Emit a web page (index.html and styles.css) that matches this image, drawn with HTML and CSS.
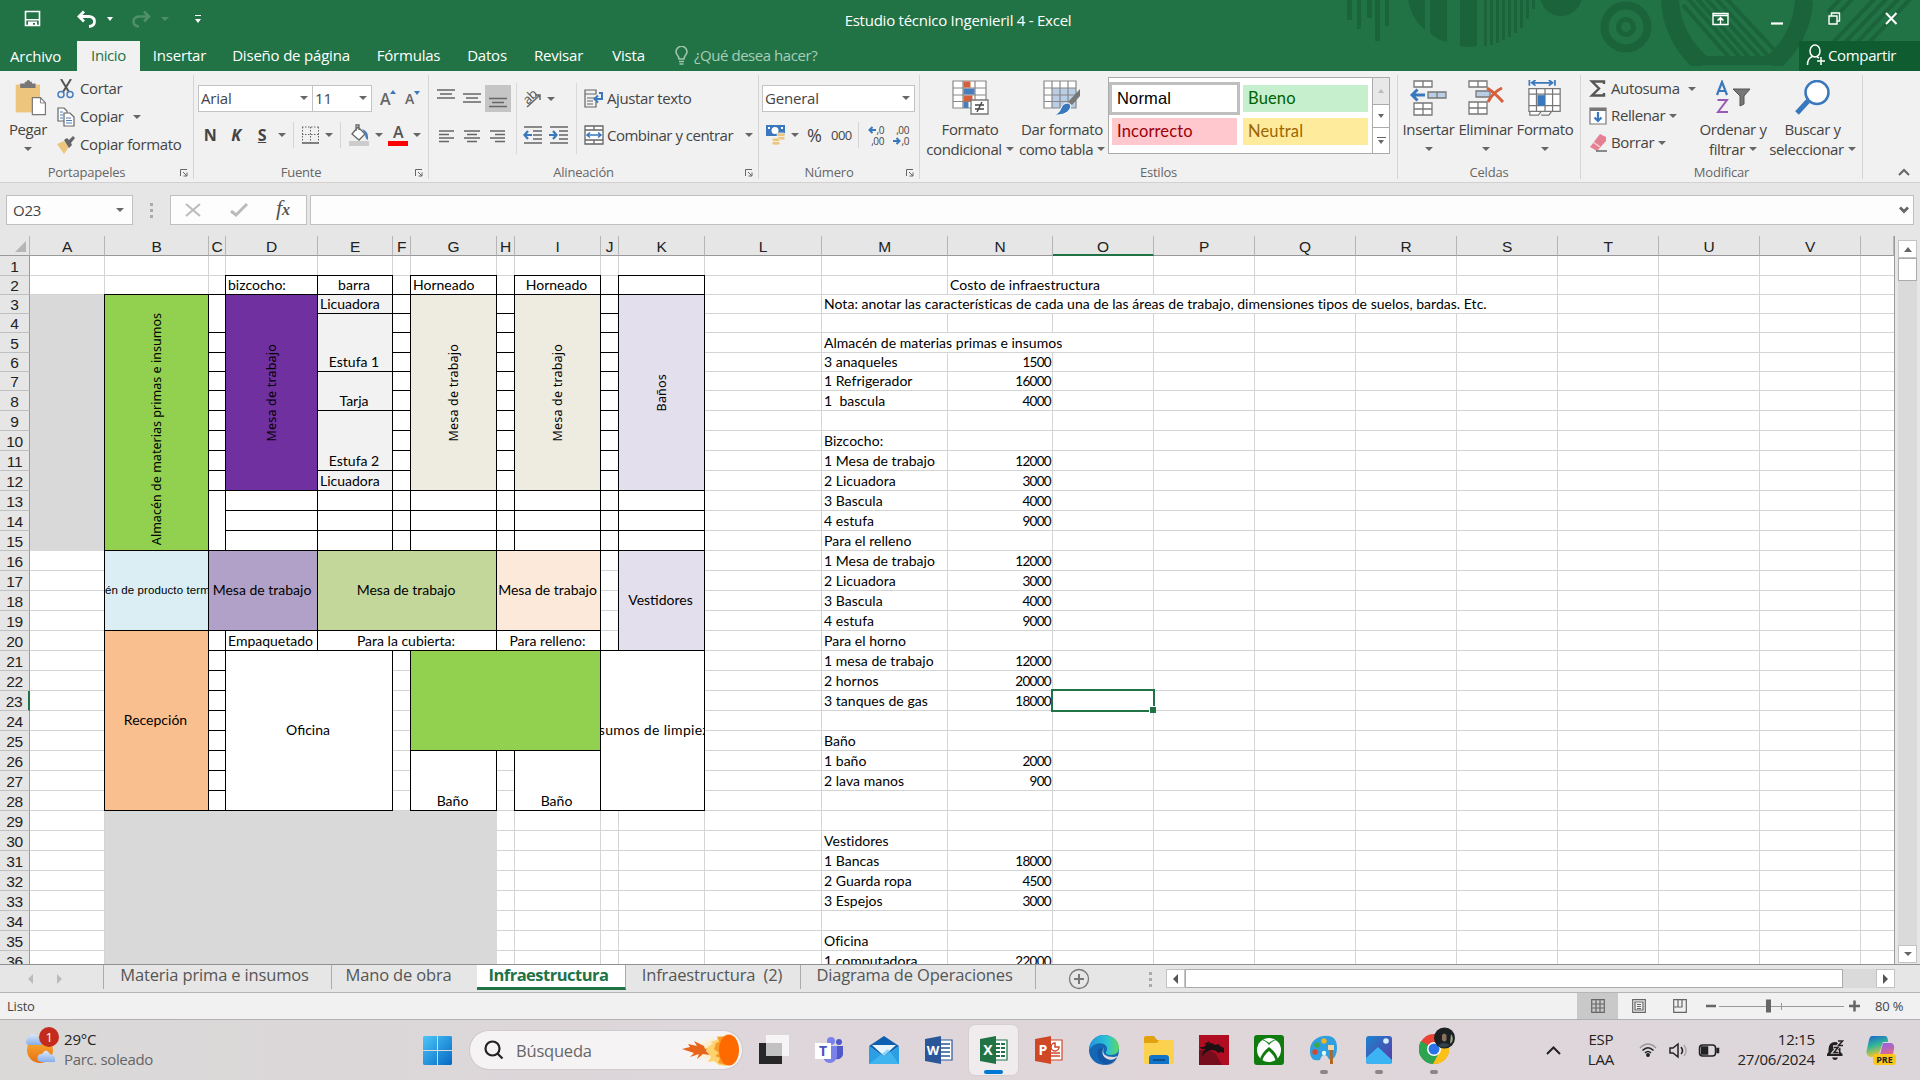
FILE: index.html
```html
<!DOCTYPE html>
<html lang="es">
<head>
<meta charset="utf-8">
<title>Estudio técnico Ingenieril 4 - Excel</title>
<link rel="stylesheet" href="styles.css">
</head>
<body>
<header class="top">
  <svg class="deco" width="580" height="66" viewBox="1340 0 580 66">
    <g fill="#1b633b">
      <path d="M1347 0h5v20h-5zM1357 0h4v29h-4zM1367 0h5v18h-5zM1375 0h5v41h-5zM1385 0h4v26h-4z"/>
      <path d="M1408 0h17v30q-14-12-17-30zM1430 0h17v42q-10-2-17-9zM1460 0h17v46q-9 2-17 0z"/>
      <path d="M1484 0h3v46h-3zM1490 0h3v45h-3zM1496 0h3v43h-3zM1502 0h3v40h-3zM1508 0h3v37h-3zM1514 0h3v33h-3zM1520 0h3v28h-3zM1526 0h3v19h-3zM1532 0h3v9h-3z"/>
      <circle cx="1561" cy="-5" r="21"/>
    </g>
    <g fill="none" stroke="#1b633b">
      <circle cx="1626" cy="27" r="21.500" stroke-width="8"/><circle cx="1626" cy="27" r="7.500" stroke-width="5"/>
      <path stroke-width="18" d="M1670 0q2 38 33 65M1804 0q-2 38-33 65"/>
      <path stroke-width="4" d="M1683 5l51 58M1684-6l60 68M1692-7l61 69M1700-8l62 68M1710-8l60 66M1720-8l60 64"/>
      <path stroke-width="4" d="M1878-5l-53 56M1890-5l-53 56M1902-5l-53 56M1914-5l-53 56M1856-5l-28 30M1844-5l-16 17"/>
    </g>
    <path fill="#1b633b" d="M1694 56h88v9h-88z"/>
  </svg>
  <div class="titlebar">
    <div class="qat">
      <svg width="18" height="18" viewBox="0 0 18 18"><path fill="none" stroke="#fff" stroke-width="1.600" d="M1.500 1.500h14v14h-14z"/><path fill="#fff" d="M2 9h13v1.500H2zM4 11.500h9V16h-2v-3H9v3H4z"/></svg>
      <svg class="undo" width="20" height="18" viewBox="0 0 20 18" fill="none" stroke="#fff" stroke-width="2.800"><path d="M7 1.500L2 6.500l5 5M3 6.500h9q5.500.5 5.500 5t-5.500 5"/></svg>
      <i class="dd w"></i>
      <svg class="redo" width="20" height="18" viewBox="0 0 20 18" fill="none" stroke="#4f8f6c" stroke-width="2.600"><path d="M13 1.500l5 5-5 5M17 6.500H8q-5.500.5-5.500 5t5.500 5"/></svg>
      <i class="dd dim"></i>
      <span class="custom"><i class="bar"></i><i class="dd w"></i></span>
    </div>
    <div class="doc-title">Estudio técnico Ingenieril 4 - Excel</div>
    <svg class="winctl" width="190" height="16" viewBox="0 0 190 16" fill="none" stroke="#fff" stroke-width="1.400"><path d="M1 2.500h15v11H1zM1 4.500h15M8.500 13V7M5.500 9.500l3-3 3 3"/><path stroke-width="2.200" d="M59 12.500h12"/><path d="M117 5h8v8h-8zM119.500 5V2h8v8H125"/><path stroke-width="2" d="M174 2l10.500 11M184.500 2L174 13"/></svg>
  </div>
  <nav class="tabs">
    <span class="tab file">Archivo</span><span class="tab active">Inicio</span><span class="tab ins">Insertar</span><span class="tab dis">Diseño de página</span><span class="tab form">Fórmulas</span><span class="tab dat">Datos</span><span class="tab rev">Revisar</span><span class="tab vis">Vista</span>
    <svg class="bulb" width="15" height="20" viewBox="0 0 15 20" fill="none" stroke="#9cc4ac" stroke-width="1.600"><path d="M5 13q0-2-2-4.500a5.300 5.300 0 1 1 9 0Q10 11 10 13zM5 15.500h5M5.500 18h4"/></svg>
    <span class="ask">¿Qué desea hacer?</span>
    <span class="share"><svg width="20" height="22" viewBox="0 0 20 22" fill="none" stroke="#fff" stroke-width="1.500"><ellipse cx="9" cy="7" rx="5" ry="6"/><path d="M1.500 21q0-7 5-8.500M11 13l2 1M15 13v8M11 17h8"/></svg>Compartir</span>
  </nav>
</header>

<section class="ribbon">
  <div class="group g1">
    <div class="tools row">
      <div class="big paste"><svg width="36" height="40" viewBox="0 0 36 40"><path fill="#edc57c" d="M1 5h27v31H1z"/><path fill="#777" d="M6 9V4h5V2h2q0-2 2-2t2 2h2v2h4v5z"/><path fill="#fff" stroke="#777" stroke-width="1.300" d="M19.500 19.500h9l5.500 6v13H19.500z"/><path fill="none" stroke="#777" d="M28.500 19.500v6H34"/></svg><span>Pegar</span><i class="dd low"></i></div>
      <div class="list">
        <div><svg width="18" height="20" viewBox="0 0 18 20" fill="none" stroke-width="2"><path stroke="#555" d="M4 0l8 13M14 0L6 13"/><circle cx="4" cy="15.500" r="3" stroke="#4a7ebb" stroke-width="1.500"/><circle cx="13" cy="15.500" r="3" stroke="#4a7ebb" stroke-width="1.500"/></svg><span>Cortar</span></div>
        <div><svg width="18" height="20" viewBox="0 0 18 20" fill="#fff" stroke="#666" stroke-width="1.200"><path d="M1 1h6l3 3v10H1z"/><path d="M7 6h6l4 4v9H7z"/><path stroke="#4a7ebb" d="M3 5h3M3 8h3M3 11h3M9 11h5M9 13.500h6M9 16h6"/></svg><span>Copiar</span><i class="dd g"></i></div>
        <div><svg width="18" height="18" viewBox="0 0 18 18"><path fill="#edc57c" d="M0 8l7-3 5 6-5 7z"/><path fill="#666" d="M7 4l3-2 2 2 4-4 2 2-4 5 1 2-3 3z"/></svg><span>Copiar formato</span></div>
      </div>
    </div>
    <div class="glabel">Portapapeles<svg class="launch" viewBox="0 0 8 8"><path d="M.5 7V.5H7M3 3l4 4M7 3.500V7H3.500"/></svg></div>
  </div>

  <div class="group g2">
    <div class="tools col">
      <div class="line a"><span class="combo fname">Arial<i class="dd g"></i></span><span class="combo fsize">11<i class="dd g"></i></span><b class="fa">A<svg width="6" height="4" viewBox="0 0 6 4"><path d="M0 4l3-4 3 4z"/></svg></b><b class="fa sm">A<svg width="6" height="4" viewBox="0 0 6 4"><path d="M0 0l3 4 3-4z"/></svg></b></div>
      <div class="line b"><b class="fmt">N</b><b class="fmt it">K</b><b class="fmt un">S</b><i class="dd g"></i><u class="vs"></u>
        <svg width="19" height="18" viewBox="0 0 19 18" stroke="#666" fill="none"><path stroke-dasharray="1.500 1.500" d="M1 1h17M1 8.500h17M1.500 1v16M9.500 1v16M17.500 1v16"/><path stroke-width="1.600" d="M1 17h17"/></svg><i class="dd g"></i><u class="vs"></u>
        <svg width="22" height="22" viewBox="0 0 22 22"><path fill="#ccc" d="M1 17h20v5H1z"/><path fill="#fff" stroke="#666" stroke-width="1.300" d="M10 3l7 7-6 6-7-6zM8 7V1h3v5"/><path fill="#4a7ebb" d="M14 5q7 2 6 11-3-1-3-6z"/></svg><i class="dd g"></i>
        <span class="fcolor">A</span><i class="dd g"></i></div>
    </div>
    <div class="glabel">Fuente<svg class="launch" viewBox="0 0 8 8"><path d="M.5 7V.5H7M3 3l4 4M7 3.500V7H3.500"/></svg></div>
  </div>

  <div class="group g3">
    <div class="tools row">
      <div class="align">
        <div class="line a"><svg class="ic" viewBox="0 0 26 27"><path d="M4 5h18M7 9h12M4 13h18"/></svg><svg class="ic" viewBox="0 0 26 27"><path d="M4 9h18M7 13h12M4 17h18"/></svg><svg class="ic sel" viewBox="0 0 26 27"><path d="M4 13.500h18M7 17.500h12M4 21.500h18"/></svg></div>
        <div class="line b"><svg class="ic" viewBox="0 0 26 27"><path d="M6 9h15M6 12.500h10M6 16h15M6 19.500h10"/></svg><svg class="ic" viewBox="0 0 26 27"><path d="M5 9h16M8 12.500h10M5 16h16M8 19.500h10"/></svg><svg class="ic" viewBox="0 0 26 27"><path d="M5 9h15M10 12.500h10M5 16h15M10 19.500h10"/></svg></div>
      </div>
      <div class="indent">
        <div class="line a"><svg width="20" height="20" viewBox="0 0 20 20" fill="none" stroke="#666" stroke-width="1.500"><text x="1" y="14" transform="rotate(-45 6 9)" class="ab">ab</text><path d="M5 18L18 6M18 11V6h-5"/></svg><i class="dd g"></i></div>
        <div class="line b"><svg width="19" height="18" viewBox="0 0 19 18" fill="none" stroke="#666" stroke-width="1.400"><path d="M1 1h18M10 5h9M10 9h9M10 13h9M1 17h18"/><path stroke="#3a78bd" stroke-width="2.200" d="M9 9H2M5 5L1.500 9 5 13"/></svg><svg width="19" height="18" viewBox="0 0 19 18" fill="none" stroke="#666" stroke-width="1.400"><path d="M1 1h18M10 5h9M10 9h9M10 13h9M1 17h18"/><path stroke="#3a78bd" stroke-width="2.200" d="M0 9h7M4 5l3.500 4L4 13"/></svg></div>
      </div>
      <div class="wrap">
        <div class="line a"><svg width="20" height="19" viewBox="0 0 20 19" fill="none" stroke="#666" stroke-width="1.200"><path d="M1 1h11v4H1zM1 5v13h11v-5M3 9h8M3 12h6M3 15h6"/><path stroke="#3a78bd" stroke-width="2" d="M15 4h3v6h-7M14 6.500L10.500 10l3.500 3.500"/></svg><span>Ajustar texto</span></div>
        <div class="line b"><svg width="20" height="20" viewBox="0 0 20 20" fill="#fff" stroke="#666" stroke-width="1.300"><path d="M1 1h18v18H1zM10 1v4M10 15v4M1 5h18M1 15h18"/><path stroke="#3a78bd" stroke-width="1.600" fill="none" d="M3 10h14M6 7.500L3 10l3 2.500M14 7.500l3 2.500-3 2.500"/></svg><span>Combinar y centrar</span><i class="dd g"></i></div>
      </div>
    </div>
    <div class="glabel">Alineación<svg class="launch" viewBox="0 0 8 8"><path d="M.5 7V.5H7M3 3l4 4M7 3.500V7H3.500"/></svg></div>
  </div>

  <div class="group g4">
    <div class="tools col">
      <div class="line a"><span class="combo num">General<i class="dd g"></i></span></div>
      <div class="line b"><svg width="20" height="20" viewBox="0 0 20 20"><path fill="#3a78bd" d="M0 0h19v11H0z"/><circle cx="9" cy="5.500" r="3.500" fill="#fff"/><path fill="#fff" d="M2 2h2v2H2zM15 2h2v2h-2z"/><g fill="#edc57c" stroke="#f1f1f1" stroke-width=".8"><rect x="11" y="8" width="8" height="3.500" rx="1.700"/><rect x="11" y="11.500" width="8" height="3.500" rx="1.700"/><rect x="6" y="13" width="8" height="3.500" rx="1.700"/><rect x="6" y="16.500" width="8" height="3.500" rx="1.700"/></g></svg><i class="dd g"></i><span class="pct">%</span><span class="mil">000</span><u class="vs"></u>
        <div class="dec"><p><svg width="8" height="8" viewBox="0 0 8 8"><path d="M8 4H1.500M4.500 1L1.500 4l3 3"/></svg>,0</p><p>,00</p></div>
        <div class="dec"><p>,00</p><p><svg width="8" height="8" viewBox="0 0 8 8"><path d="M0 4h6.500M3.500 1l3 3-3 3"/></svg>,0</p></div></div>
    </div>
    <div class="glabel">Número<svg class="launch" viewBox="0 0 8 8"><path d="M.5 7V.5H7M3 3l4 4M7 3.500V7H3.500"/></svg></div>
  </div>

  <div class="group g5">
    <div class="tools row">
      <div class="big cond"><svg width="37" height="36" viewBox="0 0 37 36"><path fill="#fff" stroke="#888" stroke-width="1.200" d="M1 1h33v27H1zM1 8h33M1 15h33M1 21.500h33M11 1v27M23 1v27"/><path fill="#d65f3c" d="M11.500 1.500h7v6h-7zM11.500 15.500h9v6h-9z"/><path fill="#4a7ebb" d="M11.500 8.500h11v6h-11zM11.500 22h5v6h-5z"/><path fill="#fff" stroke="#777" stroke-width="1.300" d="M19 20h17v14H19z"/><path fill="none" stroke="#444" stroke-width="1.400" d="M23 25h9M23 29h9M30 22l-5 10"/></svg><span>Formato</span><span>condicional<i class="dd g"></i></span></div>
      <div class="big tabl"><svg width="38" height="36" viewBox="0 0 38 36"><path fill="#fff" d="M1 1h32v27H1z"/><path fill="#b9cde4" d="M9 8h24v20H9z"/><path fill="none" stroke="#888" stroke-width="1.200" d="M1 1h32v27H1zM1 8h32M1 15h32M1 21.500h32M9 1v27M17 1v27M25 1v27"/><path fill="#777" d="M37 9v7l-8 9-4-3z"/><path fill="#3a78bd" stroke="#fff" d="M25 23q4 1 2 6-4 7-17 6 6-1 8-7 2-5 7-5z"/></svg><span>Dar formato</span><span>como tabla<i class="dd g"></i></span></div>
      <div class="gallery"><div class="styles"><span class="st normal">Normal</span><span class="st good">Bueno</span><span class="st bad">Incorrecto</span><span class="st neutral">Neutral</span></div>
        <div class="gscroll"><span class="off"><i class="up"></i></span><span><i class="dd g"></i></span><span><i class="bar d"></i><i class="dd g"></i></span></div></div>
    </div>
    <div class="glabel est">Estilos</div>
  </div>

  <div class="group g6">
    <div class="tools row">
      <div class="big ci"><svg width="38" height="36" viewBox="0 0 38 36" fill="#fff" stroke="#777" stroke-width="1.300"><path d="M4 1h18v6H4zM13 1v6M4 23h18v12H4zM4 29h18M13 23v12"/><path fill="#b9cde4" d="M18 12h18v6H18zM27 12v6"/><path fill="none" stroke="#3a78bd" stroke-width="3" d="M15 15H3M7.500 9.500L2 15l5.500 5.500"/></svg><span>Insertar</span><i class="dd low"></i></div>
      <div class="big ce"><svg width="38" height="36" viewBox="0 0 38 36" fill="#fff" stroke="#777" stroke-width="1.300"><path d="M2 1h18v6H2zM11 1v6M2 22h18v12H2zM2 28h18M11 22v12"/><path fill="#b9cde4" d="M9 11h14v6H9z"/><path fill="none" stroke="#d65f3c" stroke-width="3" d="M20 8q7 4 16 14M35 8q-9 4-14 14"/></svg><span>Eliminar</span><i class="dd low"></i></div>
      <div class="big cf"><svg width="36" height="38" viewBox="0 0 36 38" fill="#fff" stroke="#777" stroke-width="1.300"><path d="M1 9h33v24H1zM1 15h33M1 27h33M9 9v24M18 9v24M26 9v24M2 33v4h9l3-4M14 37h8l3-4"/><path fill="#3a78bd" stroke="none" d="M10 16h8v11h-8z"/><path fill="none" stroke="#3a78bd" stroke-width="1.800" d="M1.500 0v6M28.500 0v6M4 3h22M8 0L4 3l4 3M22 0l4 3-4 3"/></svg><span>Formato</span><i class="dd low"></i></div>
    </div>
    <div class="glabel">Celdas</div>
  </div>

  <div class="group g7">
    <div class="tools row">
      <div class="list edit">
        <div><svg width="18" height="17" viewBox="0 0 18 17"><path fill="none" stroke="#555" stroke-width="2.400" d="M15 4V1.500H3l7 7-7 7h12V13"/></svg><span>Autosuma</span><i class="dd g far"></i></div>
        <div><svg width="18" height="18" viewBox="0 0 18 18"><path fill="#fff" stroke="#777" stroke-width="1.200" d="M1 1h16v16H1z"/><path fill="#777" d="M1 1h16v3H1z"/><path fill="none" stroke="#3a78bd" stroke-width="2.200" d="M9 5v9M5.500 10.500L9 14l3.500-3.500"/></svg><span>Rellenar</span><i class="dd g"></i></div>
        <div><svg width="18" height="18" viewBox="0 0 18 18"><path fill="#e58094" d="M11 0l6 3v4l-9 10-7-4z"/><path stroke="#f5d3d8" stroke-width="1.500" d="M4 8l7 5"/><path stroke="#666" stroke-width="1.500" d="M7 17h11"/></svg><span>Borrar</span><i class="dd g"></i></div>
      </div>
      <div class="big so"><svg width="36" height="34" viewBox="0 0 36 34"><path fill="none" stroke="#3a78bd" stroke-width="2.200" d="M2 14L7 1l5 13M3.500 10h7"/><path fill="none" stroke="#9b59b6" stroke-width="2" d="M2.500 19H12L3 31h10"/><path fill="#777" stroke="#555" d="M18 8h17l-6 7v8l-4 2V15z"/></svg><span>Ordenar y</span><span>filtrar<i class="dd g"></i></span></div>
      <div class="big fi"><svg width="36" height="36" viewBox="0 0 36 36" stroke="#3a78bd"><path stroke-width="5" d="M2 33l11-12"/><circle cx="22" cy="12.500" r="11.500" fill="#fff" stroke-width="2.500"/></svg><span>Buscar y</span><span>seleccionar<i class="dd g"></i></span></div>
    </div>
    <div class="glabel">Modificar</div>
  </div>
  <svg class="collapse" width="12" height="8" viewBox="0 0 12 8"><path fill="none" stroke="#666" stroke-width="2" d="M1 7l5-5 5 5"/></svg>
</section>

<section class="formula">
  <div class="namebox">O23<i class="dd g"></i></div>
  <div class="dots"><i></i><i></i><i></i></div>
  <div class="fxbox"><svg width="16" height="14" viewBox="0 0 16 14"><path fill="none" stroke="#bbb" stroke-width="2" d="M1 1l14 12M15 1L1 13"/></svg><svg width="18" height="14" viewBox="0 0 18 14"><path fill="none" stroke="#bbb" stroke-width="3" d="M1 8l5 4L17 1"/></svg><span class="fx">f<small>x</small></span></div>
  <div class="finput"><svg width="10" height="8" viewBox="0 0 10 8"><path fill="none" stroke="#666" stroke-width="2.800" d="M1 1.500l4 4 4-4"/></svg></div>
</section>

<main class="work">
  <div id="sheet" class="sheet"></div>
  <div class="vscroll"><span class="sb"><i class="up k"></i></span><span class="thumb"></span><span class="track"></span><span class="sb"><i class="dd k"></i></span></div>
</main>

<footer class="sheetbar">
  <div class="navs"><i class="lf"></i><i class="rt"></i></div>
  <span class="stab s1">Materia prima e insumos</span><span class="stab s2">Mano de obra</span><span class="stab s3 on">Infraestructura</span><span class="stab s4">Infraestructura &nbsp;(2)</span><span class="stab s5">Diagrama de Operaciones</span>
  <svg class="plus" width="22" height="22" viewBox="0 0 22 22" fill="none" stroke="#777"><circle cx="11" cy="11" r="9.500" stroke-width="1.300"/><path stroke-width="2" d="M6 11h10M11 6v10"/></svg>
  <div class="dots"><i></i><i></i><i></i></div>
  <div class="hscroll"><span class="sb"><i class="lf k"></i></span><span class="thumb"></span><span class="track"></span><span class="sb"><i class="rt k"></i></span></div>
</footer>

<footer class="status">
  <span class="ready">Listo</span>
  <div class="views">
    <span class="vb on"><svg width="14" height="14" viewBox="0 0 14 14"><path d="M.7.7h12.600v12.600H.7zM.7 5h12.600M.7 9h12.600M5 .7v12.600M9 .7v12.600"/></svg></span>
    <span class="vb"><svg width="14" height="14" viewBox="0 0 14 14"><path d="M.7.7h12.600v12.600H.7zM3 3h8v8H3zM5 5.500h4M5 7.500h4M5 9.500h4"/></svg></span>
    <span class="vb"><svg width="14" height="14" viewBox="0 0 14 14"><path d="M.7.7h12.600v12.600H.7zM.7 8H9V.7M5 .7V8"/></svg></span>
  </div>
  <svg class="zoom" width="156" height="16" viewBox="0 0 156 16" stroke="#666"><path stroke-width="2.500" d="M1 8h10M144 8h11M149.500 2.500v11"/><path stroke="#999" d="M14 8.500h125M76.500 5v7"/><path stroke-width="5" d="M63.500 1.500v13"/></svg>
  <span class="pc">80 %</span>
</footer>

<footer class="taskbar">
  <div class="weather"><svg width="32" height="44" viewBox="0 0 32 44"><defs><linearGradient id="sun" x2="0" y2="1"><stop stop-color="#f9b43a"/><stop offset="1" stop-color="#e9700f"/></linearGradient><linearGradient id="cl" x2="0" y2="1"><stop stop-color="#dce9fb"/><stop offset="1" stop-color="#86aeea"/></linearGradient></defs><circle cx="16" cy="23" r="13" fill="url(#sun)"/><path fill="url(#cl)" d="M4 18a4 4 0 0 1 0-7q4-8 9-1 5 1 4 8z"/><path fill="url(#cl)" d="M17 35a4 4 0 0 1 1-8q4-7 8 0 6 1 5 8z"/></svg><b class="badge">1</b><div class="wt"><span>29°C</span><small>Parc. soleado</small></div></div>
  <svg class="start" width="29" height="29" viewBox="0 0 29 29"><defs><linearGradient id="win" x2="1" y2="1"><stop stop-color="#4cc6f8"/><stop offset="1" stop-color="#0468c4"/></linearGradient></defs><path fill="url(#win)" d="M1 0h13v14H0V1zM15 0h13l1 1v13H15zM0 15h14v14H1l-1-1zM15 15h14v13l-1 1H15z"/></svg>
  <div class="search"><svg width="20" height="20" viewBox="0 0 20 20" fill="none" stroke="#222" stroke-width="2.200"><circle cx="8.500" cy="8.500" r="7"/><path d="M13.500 13.500l5 5"/></svg><span>Búsqueda</span>
    <svg class="fire" width="58" height="32" viewBox="0 0 58 32"><defs><radialGradient id="fg"><stop stop-color="#ffdf8a"/><stop offset="1" stop-color="#fff2cf" stop-opacity="0"/></radialGradient></defs><ellipse cx="34" cy="16" rx="26" ry="15" fill="url(#fg)"/><path fill="#e8641b" d="M0 15l8-2-2-3 9 2-3-5 10 5 1 3 3-1-2 3 4 4-7-1-6 5 2-5-9 3 4-4z"/><path fill="#ffd26e" d="M24 15l7-6-3-1 7-2V2l6 1 4-3v32l-8-1-5-4-6 1 3-5z"/><path fill="#f59a2b" d="M34 9l3-1-1-5 8-1v29l-8-2 2-5-5-2 4-3-5-4z"/><ellipse cx="47" cy="16" rx="10" ry="15.500" fill="#ff6a00"/></svg>
  </div>
  <div class="apps">
    <span><svg width="30" height="30" viewBox="0 0 30 30"><path fill="#272727" d="M0 8h23v21H0z"/><path fill="#fff" opacity=".72" d="M7 0h23v21H7z"/></svg></span>
    <span><svg width="28" height="26" viewBox="0 0 28 26"><circle cx="16" cy="4" r="4" fill="#7b83eb"/><circle cx="24" cy="5" r="3" fill="#5059c9"/><path fill="#5059c9" d="M19 9h9v9q-2 5-7 4z"/><path fill="#7b83eb" d="M9 9h13v11q-2 6-8 6-5-1-6-6z"/><path fill="#fff" d="M0 6h16v16H0z"/><text x="8" y="19" class="logo" fill="#4b53bc" font-size="14">T</text></svg></span>
    <span><svg width="30" height="28" viewBox="0 0 30 28"><path fill="#0f5fb0" d="M0 10L15 0l15 10-15 11z"/><path fill="#e8f4fb" d="M3 9h24l-12 11z"/><path fill="#2b9fe6" d="M0 10l15 11L30 10v18H0z"/><path fill="#4cc3f5" d="M0 28L19 13l11 15z" opacity=".6"/></svg></span>
    <span><svg width="28" height="28" viewBox="0 0 28 28"><path fill="#fff" stroke="#2b579a" stroke-width="1.200" d="M14 4h13v20H14z"/><path stroke="#2b579a" stroke-width="1.500" d="M15 8h10M15 12h10M15 16h10M15 20h10"/><path fill="#2b579a" d="M0 3l16-3v28L0 25z"/><text x="8" y="19" class="logo" fill="#fff" font-size="13">W</text></svg></span>
    <span class="cur"><svg width="28" height="28" viewBox="0 0 28 28"><path fill="#fff" stroke="#217346" stroke-width="1.200" d="M14 4h13v20H14z"/><path stroke="#217346" stroke-width="2" stroke-dasharray="4 1" d="M16 8h10M16 12h10M16 16h10M16 20h10"/><path fill="#217346" d="M0 3l16-3v28L0 25z"/><text x="8" y="19" class="logo" fill="#fff" font-size="14">X</text></svg></span>
    <span><svg width="28" height="28" viewBox="0 0 28 28"><path fill="#fff" stroke="#d04727" stroke-width="1.200" d="M14 4h13v20H14z"/><path fill="none" stroke="#d04727" stroke-width="1.500" d="M15 17h10M15 20h10M20 7a4 4 0 1 0 4 4h-4z"/><path fill="#d04727" d="M0 3l16-3v28L0 25z"/><text x="8" y="19" class="logo" fill="#fff" font-size="14">P</text></svg></span>
    <span><svg width="30" height="30" viewBox="0 0 30 30"><defs><linearGradient id="e1" x2="1"><stop stop-color="#2193dd"/><stop offset=".6" stop-color="#2cc3d5"/><stop offset="1" stop-color="#5fd75b"/></linearGradient></defs><circle cx="15" cy="15" r="15" fill="#1467b4"/><path fill="url(#e1)" d="M0 15A15 15 0 0 1 15 0q14 1 15 12 0 8-8 8-6 0-5-3 3-5-2-8Q6 6 0 15z"/><path fill="#e0d8db" d="M15 12q-4 10 10 10l4-1q-4 5-9 4-10-4-5-13z"/><path fill="#0f4c9c" d="M9 14q-3 12 9 16 7 0 10-7-7 4-13-1-3-4-1-9z" opacity=".6"/></svg></span>
    <span><svg width="30" height="28" viewBox="0 0 30 28"><path fill="#e2a20f" d="M0 2q0-2 2-2h8l3 4h15v8H0z"/><path fill="#fcd14d" d="M0 7h13l2-3h13q2 0 2 2v20q0 2-2 2H2q-2 0-2-2z"/><path fill="#1274c8" d="M5 28v-6q0-3 3-3h14q3 0 3 3v6z"/><path stroke="#0c4f8d" stroke-width="2" d="M9 24h12"/></svg></span>
    <span><svg width="30" height="30" viewBox="0 0 30 30"><path fill="#b00d22" d="M0 0h30v30H0z"/><path fill="#1d1013" opacity=".4" d="M0 15h10l7 4 6 11H0z"/><path fill="#1d1013" d="M0 12q5 1 7-2 5-4 9 0l4-1 1 2 4 2v5l-3-1-3 1-2-2q-5-2-8 0-4 2-6 5 0-4 4-7-4 1-7-2z"/><path fill="#1d1013" d="M5 9l6-3-2 4z"/></svg></span>
    <span><svg width="30" height="30" viewBox="0 0 30 30"><rect width="30" height="30" rx="3" fill="#107c10"/><circle cx="15" cy="15" r="12" fill="#fff"/><path fill="#107c10" d="M15 8Q9 3 7 5q4 0 8 5 4-5 8-5-2-2-8 3zM15 12q-8 6-9 13l2 1q2-6 7-10 5 4 7 10l2-1q-1-7-9-13z"/></svg></span>
    <span class="run"><svg width="30" height="30" viewBox="0 0 30 30"><path fill="#2f9fe0" d="M1 18Q0 4 14 1q14-2 14 12 0 9-6 12-3-1-4-4-5-3-7 4-9 2-10-7z"/><circle cx="8" cy="10" r="2.700" fill="#3aa845"/><circle cx="15" cy="6" r="2.700" fill="#f3b51e"/><circle cx="6" cy="17" r="2.700" fill="#d8472b"/><circle cx="15" cy="18" r="2.200" fill="#dff"/><path fill="#f0d3a8" d="M19 10h6v5h-6z"/><path fill="#b5651d" d="M21 15h2.500l.5 14h-3z"/></svg></span>
    <span class="run"><svg width="28" height="28" viewBox="0 0 28 28"><defs><linearGradient id="ph" x2="1" y2="1"><stop stop-color="#1d83cf"/><stop offset="1" stop-color="#5a3aa6"/></linearGradient></defs><rect x="1" width="26" height="28" rx="3" fill="url(#ph)"/><path fill="#3cb4f4" d="M1 22l12-11 14 13-1 4H4q-3 0-3-3z"/><circle cx="21" cy="5" r="2.800" fill="#d7eefc"/></svg></span>
    <span class="run"><svg width="36" height="38" viewBox="0 0 36 38"><circle cx="15" cy="22" r="15" fill="#ea4335"/><path fill="#2da44f" d="M2 14A15 15 0 0 0 14 37l7-12-6-3z"/><path fill="#fbc116" d="M15 15h13.500A15 15 0 0 1 14 37l7-13z"/><circle cx="15" cy="22" r="7" fill="#fff"/><circle cx="15" cy="22" r="5.500" fill="#2b72e8"/><circle cx="25.500" cy="11" r="10.500" fill="#1b2022"/><path fill="#8d6f5e" d="M23 8q2-3 4.500 0v5q-2 3-4.500 0z"/><path fill="#33424a" d="M19 18q6-4 12 0-6 5-12 0z"/><path fill="#a5a38a" d="M32 7q3 4 1 8l-2 2z"/></svg></span>
  </div>
  <div class="tray">
    <svg class="chev" width="15" height="9" viewBox="0 0 15 9"><path fill="none" stroke="#222" stroke-width="2" d="M1 8l6.500-6.500L14 8"/></svg>
    <div class="lang"><span>ESP</span><span>LAA</span></div>
    <svg class="tri" width="82" height="20" viewBox="0 0 82 20" fill="none" stroke="#222" stroke-width="1.500"><path stroke="#999" d="M1 8q8-8 16 0"/><path d="M3.500 10.500q5.500-5.500 11 0M6 13q3-3 6 0"/><circle cx="9" cy="15" r="1.200" fill="#222"/><path d="M31 8h3l5-4v13l-5-4h-3zM42 7q3 4 0 7"/><path stroke="#aaa" d="M45 5q4 6 0 11"/><rect x="60.500" y="5" width="16" height="11" rx="3"/><path fill="#222" d="M62.500 7h6v7h-6zM78 8.500h1.500v4H78z"/></svg>
    <div class="clock"><span>12:15</span><span>27/06/2024</span></div>
    <svg class="bell" width="18" height="20" viewBox="0 0 18 20"><path fill="#222" d="M1 16v-2l1.500-2V9q.5-7 6.500-7 4 0 5.500 3v7l2 2v2zM6 17.500h6q-1 2.500-3 2.500t-3-2.500z"/><path fill="none" stroke="#e0d6da" stroke-width="3.500" d="M11 1h5l-4 5h5M7 7h5l-4 5h5"/><path fill="none" stroke="#222" stroke-width="1.500" d="M12 1h4.500l-4 4.500H17M7.500 7.500H12L8 12.500h4.500"/></svg>
    <svg class="copilot" width="30" height="30" viewBox="0 0 30 30"><defs><linearGradient id="c1" x2=".3" y2="1"><stop stop-color="#1f5fd0"/><stop offset=".5" stop-color="#2fb59a"/><stop offset="1" stop-color="#f0c530"/></linearGradient><linearGradient id="c2" x2=".3" y2="1"><stop stop-color="#8a63ea"/><stop offset="1" stop-color="#f06a7c"/></linearGradient></defs><path fill="url(#c1)" d="M6 1h13q3 0 3 6h-5l-5 15H4q-5-2-3-8l2-9q1-4 3-4z"/><path fill="url(#c2)" d="M17 8h8q4 1 3 6l-2 10H13z"/><rect x="7" y="19" width="23" height="11" rx="3" fill="#fbc71b"/><text x="18.500" y="28" class="logo" font-size="9" fill="#222">PRE</text></svg>
  </div>
</footer>
<script src="sheet.js"></script>
</body>
</html>
```
FILE: styles.css
```css
* { box-sizing: border-box; }
body { margin: 0; width: 1920px; height: 1080px; overflow: hidden; display: flex; flex-direction: column; font-family: "Open Sans", "Noto Sans", sans-serif; font-size: 15px; letter-spacing: -0.2px; color: #444; background: #e6e6e6; }
svg { display: block; flex: none; }
i, em { font-style: normal; }
p { margin: 0; }
span, b { white-space: nowrap; }

/* triangles */
.dd { flex: none; width: 0; height: 0; border: 4px solid transparent; border-top: 4px solid #666; border-bottom: 0; }
.dd.w { border-top-color: #fff; border-width: 4px 3px 0; }
.dd.dim { border-top-color: #4f8f6c; }
.up { width: 0; height: 0; border: 4px solid transparent; border-bottom: 5px solid #bbb; border-top: 0; }
.up.k { border-bottom-color: #666; }
.lf, .rt { width: 0; height: 0; border: 5px solid transparent; border-left-width: 0; border-right: 5px solid #bbb; }
.rt { border: 5px solid transparent; border-right-width: 0; border-left: 5px solid #bbb; }
.lf.k { border-right-color: #555; }
.rt.k { border-left-color: #555; }
.bar { display: block; width: 6px; height: 1.5px; background: #fff; }
.bar.d { width: 9px; height: 1px; background: #666; }

/* title and tabs */
.top { position: relative; height: 71px; background: #217346; color: #fff; flex: none; }
.deco { position: absolute; right: 0; top: 0; }
.titlebar { position: relative; height: 41px; display: flex; align-items: center; padding: 0 0 3px 24px; }
.qat { width: 230px; display: flex; align-items: center; }
.undo { margin: 0 10px 0 35px; }
.redo { margin: 0 10px 0 18px; }
.custom { margin-left: 26px; display: flex; flex-direction: column; gap: 3px; }
.doc-title { width: 230px; margin-left: 589px; text-align: center; letter-spacing: -0.25px; padding-top: 1px; }
.winctl { margin-left: 639px; }
.tabs { position: relative; height: 30px; display: flex; align-items: center; }
.tab { height: 30px; display: flex; align-items: center; justify-content: center; padding-bottom: 3px; }
.file { width: 71px; margin-right: 6px; padding-bottom: 1px; }
.active { width: 63px; background: #f1f1f1; color: #217346; letter-spacing: -0.4px; }
.ins { width: 79px; } .dis { width: 144px; } .form { width: 91px; } .dat { width: 66px; } .rev { width: 77px; } .vis { width: 63px; }
.bulb { margin-left: 14px; }
.ask { margin-left: 5px; color: #a9cdb8; padding-bottom: 2px; letter-spacing: -0.45px; }
.share { margin-left: auto; width: 121px; height: 30px; background: #0e5c2f; display: flex; align-items: center; padding: 0 0 2px 7px; gap: 2px; letter-spacing: -0.35px; }

/* ribbon */
.ribbon { height: 112px; flex: none; background: #f1f1f1; border-bottom: 1px solid #d2d0d0; display: flex; padding-top: 4px; letter-spacing: -0.38px; }
.group { height: 104px; border-right: 1px solid #d5d5d5; display: flex; flex-direction: column; }
.g1 { width: 194px; } .g2 { width: 235px; } .g3 { width: 330px; } .g4 { width: 161px; } .g5 { width: 478px; } .g6 { width: 183px; } .g7 { width: 282px; }
.tools { height: 87px; display: flex; }
.tools.col { flex-direction: column; }
.glabel { height: 17px; display: flex; justify-content: center; align-items: center; position: relative; font-size: 13px; line-height: 17px; letter-spacing: -0.2px; color: #666; padding-top: 4px; }
.g1 .glabel, .g2 .glabel, .g3 .glabel, .g4 .glabel { padding-right: 20px; }
.launch { position: absolute; right: 5px; top: 7px; width: 8px; height: 8px; fill: none; stroke: #666; }
.big { display: flex; flex-direction: column; align-items: center; line-height: 20px; }
.big svg { margin: 5px 0 3px; height: 36px; }
.big span { display: flex; align-items: center; gap: 4px; }
.big .low { margin-top: 8px; }
.paste { width: 56px; }
.paste svg { margin-left: 6px; }
.list { display: flex; flex-direction: column; }
.list div { display: flex; height: 28px; align-items: center; gap: 5px; }
.list svg { width: 18px; }
.list .dd { margin-left: 4px; }
.list span { margin-top: -2px; }
.g1 .list { margin-left: 1px; }
.line { display: flex; align-items: center; }
.line.a { height: 27px; margin-top: 10px; }
.line.b { height: 26px; margin-top: 10px; }
.combo { height: 27px; border: 1px solid #c3c3c3; background: #fff; display: flex; align-items: center; justify-content: space-between; padding: 0 4px 1px 2px; letter-spacing: -0.2px; }
.fname { width: 115px; margin-left: 4px; }
.fsize { width: 60px; margin-left: -1px; }
.num { width: 153px; margin-left: 3px; }
.fa { font-weight: 600; color: #666; font-size: 16px; margin-left: 8px; display: flex; align-items: flex-start; width: 17px; }
.fa.sm { font-size: 14px; }
.fa svg { fill: #3a78bd; margin-top: 2px; }
.g2 .b { gap: 5px; padding-left: 8px; }
.fmt { width: 16px; text-align: center; font-size: 16px; margin-right: 5px; }
.fmt + .dd { margin-left: -2px; }
.it { font-style: italic; }
.un { text-decoration: underline; }
.vs { width: 1px; height: 26px; background: #d5d5d5; margin: 0 2px; }
.fcolor { font-size: 16px; font-weight: 600; line-height: 17px; width: 20px; text-align: center; border-bottom: 5px solid #f00; color: #555; margin: 0; }
.align { width: 87px; padding-left: 4px; }
.ic { width: 26px; height: 27px; fill: none; stroke: #666; stroke-width: 1.3; }
.sel { background: #c5c5c5; }
.indent { width: 61px; border-left: 1px solid #d9d9d9; border-right: 1px solid #d9d9d9; margin: 8px 0; }
.indent .a { margin-top: 2px; padding-left: 5px; gap: 5px; }
.indent .b { padding-left: 6px; gap: 7px; }
.ab { font: 13px "Open Sans", sans-serif; fill: #555; stroke: none; }
.wrap { padding-left: 7px; }
.wrap .line { gap: 3px; }
.wrap .line span { margin-top: -1px; }
.wrap .b span { letter-spacing: -0.5px; }
.wrap .dd { margin-left: 9px; }
.g4 .b { padding-left: 7px; }
.g4 .b > .dd { margin-left: 5px; }
.pct { font-size: 18px; margin-left: 8px; width: 18px; }
.mil { font-size: 13px; letter-spacing: -0.5px; margin: 0 4px 0 6px; width: 21px; }
.dec { width: 18px; margin: 0 2px 0 5px; }
.dec p { display: flex; justify-content: flex-end; align-items: center; font-size: 10px; line-height: 12px; height: 11px; letter-spacing: -0.4px; }
.dec svg { fill: none; stroke: #3a78bd; stroke-width: 2; }
.cond { width: 100px; } .tabl { width: 84px; }
.gallery { margin: 2px 0 0 4px; width: 282px; height: 77px; border: 1px solid #ababab; background: #fff; display: flex; }
.styles { width: 263px; padding: 7px 3px 4px; display: grid; grid-template-columns: 125px 125px; grid-template-rows: 27px 27px; gap: 6px; }
.st { font: 16.500px/26px Lato, sans-serif; padding-left: 5px; letter-spacing: 0.15px; }
.normal { font-family: "Liberation Sans", sans-serif; color: #000; outline: 3px solid #bfbfbf; background: #fff; }
.good { background: #c6efce; color: #006100; }
.bad { background: #ffc7ce; color: #9c0006; }
.neutral { background: #ffeb9c; color: #9c6500; }
.gscroll { flex: 1; border-left: 1px solid #ababab; display: grid; grid-template-rows: 26px 23px 26px; }
.gscroll span { display: flex; flex-direction: column; gap: 2px; align-items: center; justify-content: center; }
.gscroll span + span { border-top: 1px solid #ababab; }
.gscroll .dd { border-width: 4px 3px 0; }
.gscroll .up { border-width: 0 3px 4px; }
.off { background: #e8e8e8; }
.ci { width: 61px; } .ce { width: 53px; } .cf { width: 66px; }
.edit { margin-left: 8px; width: 111px; }
.edit div { height: 27px; gap: 4px; }
.edit .dd { margin-left: 0; }
.edit .far { margin-left: 4px; }
.so { width: 66px; } .fi { width: 93px; }
.collapse { margin: 93px 0 0 35px; }

/* formula bar */
.formula { height: 53px; flex: none; display: flex; padding: 12px 6px 11px; align-items: stretch; }
.namebox { width: 127px; border: 1px solid #c0c0c0; background: #fdfdfd; display: flex; justify-content: space-between; align-items: center; padding: 0 8px 1px 6px; }
.dots { display: flex; flex-direction: column; gap: 3px; justify-content: center; }
.dots i { width: 3px; height: 3px; background: #aaa; }
.formula .dots { margin: 0 17px 0 17px; }
.fxbox { width: 137px; border: 1px solid #c0c0c0; background: #fdfdfd; display: flex; align-items: center; padding-left: 14px; }
.fxbox svg + svg { margin-left: 29px; }
.fx { margin-left: 28px; font: italic 22px "Liberation Serif", serif; color: #555; padding-bottom: 5px; }
.fx small { font-size: 16px; font-weight: bold; }
.finput { flex: 1; margin-left: 3px; border: 1px solid #c0c0c0; background: #fdfdfd; display: flex; align-items: center; justify-content: flex-end; padding-right: 4px; }

/* worksheet */
.work { height: 729px; flex: none; display: flex; border-bottom: 1px solid #919191; }
.sheet { width: 1895px; height: 728px; overflow: hidden; display: grid; border-right: 1px solid #9b9b9b; background: #fff; color: #000; font: 14px Lato, sans-serif; letter-spacing: 0;
  grid-template-columns: 30px 75px 104px 17px 92px 75px 18px 86px 18px 86px 18px 86px 117px 126px 105px repeat(8, 101px) 33px;
  grid-template-rows: 20px 20px 19px 19px 19px 20px 19px 19px repeat(29, 20px); }
.ch, .rh { background: #e6e6e6; display: flex; align-items: center; justify-content: center; color: #222; font: 15.500px/18px "Liberation Sans", sans-serif; letter-spacing: -0.3px; }
.ch { border-right: 1px solid #b5b5b5; border-bottom: 1px solid #999; padding: 3px 0 0; }
.ch.now { border-bottom: 2px solid #217346; }
.rh { border-right: 1px solid #999; border-bottom: 1px solid #c0c0c0; padding-top: 2px; }
.rh.now { border-right: 2px solid #217346; }
.corner { background: #e6e6e6; border-bottom: 1px solid #999; border-right: 1px solid #b5b5b5; display: flex; justify-content: flex-end; align-items: flex-end; padding: 0 3px 3px 0; }
.corner::after { content: ""; border-left: 11px solid transparent; border-bottom: 11px solid #b5b5b5; }
.gv { border-right: 1px solid #d4d4d4; }
.gh { border-bottom: 1px solid #d4d4d4; }
.cell { min-width: 0; overflow: hidden; display: flex; align-items: flex-end; line-height: 18px; padding: 0 2px; }
.cell span { white-space: pre; }
.cost { background: #fff; border-right: 1px solid #d4d4d4; border-bottom: 1px solid #d4d4d4; letter-spacing: 0.03px; }
.box { margin: -1px 0 0 -1px; border: 1px solid #000; background: #fff; }
.c { justify-content: center; padding-right: 4px; }
.r { justify-content: flex-end; padding-right: 1px; font-size: 13.500px; letter-spacing: -0.7px; }
.m { align-items: center; justify-content: center; padding: 0 3px 2px 1px; }
.wide { letter-spacing: 0.35px; }
.v { align-items: center; justify-content: center; }
.v span { writing-mode: vertical-rl; transform: rotate(180deg); font-family: "Noto Sans", sans-serif; font-size: 12.500px; letter-spacing: 0.2px; }
.long { padding-top: 13px; }
.long span { letter-spacing: 0.03px; }
.gray { background: #d9d9d9; }
.green { background: #92d050; } .purple { background: #7030a0; } .pale { background: #f2f2f2; } .cream { background: #eeece1; }
.lilac { background: #e4dfec; } .sky { background: #daeef3; } .mauve { background: #b1a0c7; } .olive { background: #c4d79b; } .peach { background: #fde9d9; } .orange { background: #fabf8f; }
.small { font: 11.500px "Liberation Sans", sans-serif; letter-spacing: 0.1px; }
.pick { margin: -2px -1px -1px -2px; border: 2px solid #217346; z-index: 2; display: flex; align-items: flex-end; justify-content: flex-end; }
.pick::after { content: ""; width: 6px; height: 6px; background: #217346; border: solid #fff; border-width: 1px 0 0 1px; margin: 0 -3px -3px 0; flex: none; }
.vscroll { margin: 4px 0 1px 3px; width: 19px; display: flex; flex-direction: column; }
.sb { border: 1px solid #c3c3c3; background: #fff; display: flex; align-items: center; justify-content: center; flex: none; }
.vscroll .sb { height: 18px; }
.vscroll .thumb { height: 23px; background: #fff; border: 1px solid #ababab; }
.track { flex: 1; background: #dadada; }

/* sheet tabs */
.sheetbar { height: 28px; flex: none; display: flex; align-items: flex-start; border-bottom: 1px solid #b5b5b5; }
.navs { width: 103px; height: 28px; padding-left: 28px; display: flex; gap: 24px; align-items: center; }
.stab { height: 24px; font-size: 16.500px; letter-spacing: -0.16px; line-height: 19px; text-align: center; color: #555; border-right: 1px solid #ababab; }
.s1 { width: 229px; border-left: 1px solid #ababab; padding-right: 6px; } .s2 { width: 145px; border-right: 0; padding-right: 12px; } .s3 { width: 149px; } .s4 { width: 175px; padding-right: 2px; } .s5 { width: 235px; padding-right: 7px; }
.on.stab { background: #fff; color: #217346; font-weight: 700; letter-spacing: -0.5px; border-bottom: 3px solid #217346; height: 25px; border-right: 1px solid #ababab; padding-right: 5px; }
.plus { margin: 3px 0 0 32px; }
.sheetbar .dots { margin: 7px 14px 0 59px; }
.hscroll { height: 19px; margin-top: 4px; width: 729px; display: flex; }
.hscroll .sb { width: 19px; }
.hscroll .thumb { width: 658px; background: #fff; border: 1px solid #ababab; }

/* status bar */
.status { height: 27px; flex: none; background: #f1f1f1; border-bottom: 1px solid #b0b0b0; display: flex; align-items: center; font-size: 13px; padding: 0 16px 0 7px; }
.views { display: flex; margin-left: auto; height: 26px; }
.vb { width: 41px; display: flex; align-items: center; justify-content: center; }
.vb.on { background: #c9c9c9; }
.vb svg { fill: none; stroke: #666; stroke-width: 1.2; }
.zoom { margin: 0 14px 0 5px; }
.pc { width: 29px; }

/* taskbar */
.taskbar { height: 60px; flex: none; display: flex; align-items: center; background: linear-gradient(90deg, #dad9d8, #ddd6da 35%, #e0d6da 60%, #dcd6da); color: #222; font-size: 15px; }
.weather { width: 423px; display: flex; padding: 0 0 2px 24px; gap: 8px; position: relative; }
.badge { position: absolute; left: 39px; top: 0; width: 20px; height: 20px; border-radius: 50%; background: #c42b1c; color: #fff; font: 13px/20px "Open Sans", sans-serif; text-align: center; }
.wt { display: flex; flex-direction: column; line-height: 20px; padding-top: 2px; }
.wt small { font-size: 15px; color: #666; letter-spacing: -0.35px; }
.search { margin-left: 18px; width: 272px; height: 38px; border-radius: 19px; background: #f5f3f4; box-shadow: 0 0 0 1px #cfcacc; display: flex; align-items: center; padding: 0 2px 0 14px; font-size: 16.500px; color: #666; }
.search span { margin-left: 12px; }
.fire { margin-left: auto; }
.apps { display: flex; margin-left: 4px; }
.apps span { width: 55px; height: 50px; display: flex; align-items: center; justify-content: center; position: relative; }
.apps span.cur { width: 49px; margin: 0 3px; background: #f0ebed; border-radius: 6px; box-shadow: 0 0 0 1px #d6ced1; }
.cur::after, .run::after { content: ""; position: absolute; bottom: 1px; width: 19px; height: 4px; border-radius: 2px; background: #0078d4; }
.run::after { width: 8px; background: #8a8587; }
.run svg { margin-left: 1px; }
.run:last-child svg { margin: -8px 0 0 6px; }
.logo { font-family: "Open Sans", sans-serif; font-weight: 700; text-anchor: middle; letter-spacing: 0; }
.tray { margin-left: auto; display: flex; align-items: center; padding-right: 24px; }
.lang, .clock { display: flex; flex-direction: column; line-height: 20px; text-align: center; padding-bottom: 2px; }
.lang { margin: 0 25px 0 27px; }
.clock { width: 80px; text-align: right; margin: 0 11px 0 14px; }
.copilot { margin-left: 22px; }
```
FILE: sheet.js
```js
const sheet = document.getElementById('sheet');
const letters = 'ABCDEFGHIJKLMNOPQRSTUVW';

function add(cls, col, row, cols, rows, text) {
  const el = document.createElement('div');
  el.className = cls;
  el.style.gridArea = `${row} / ${col} / span ${rows} / span ${cols}`;
  if (text) {
    const s = document.createElement('span');
    s.textContent = text;
    el.append(s);
  }
  sheet.append(el);
}

// gridlines
for (let c = 2; c <= 23; c++) add('gv', c, 2, 1, 36);
for (let r = 2; r <= 37; r++) add('gh', 2, r, 23, 1);

// headers
add('corner', 1, 1, 1, 1);
[...letters].forEach((l, i) => add(l === 'O' ? 'ch now' : 'ch', i + 2, 1, 1, 1, l === 'W' ? '' : l));
for (let r = 1; r <= 36; r++) add(r === 23 ? 'rh now' : 'rh', 1, r + 1, 1, 1, String(r));

// [first cell column, row, columns, rows, classes, text]
const blocks = [
  ['A', 3, 1, 13, 'gray'], ['B', 29, 6, 8, 'gray'],
  ['C', 3, 1, 2, 'box'], ['C', 13, 1, 3, 'box'], ['C', 20, 1, 1, 'box'],
  ['D', 2, 1, 1, 'box', 'bizcocho:'], ['E', 2, 1, 1, 'box c', 'barra'], ['G', 2, 1, 1, 'box', 'Horneado'],
  ['I', 2, 1, 1, 'box c', 'Horneado'], ['K', 2, 1, 1, 'box', ''],
  ['E', 3, 1, 1, 'box pale', 'Licuadora'], ['E', 4, 1, 3, 'box pale c', 'Estufa 1'], ['E', 7, 1, 2, 'box pale c', 'Tarja'],
  ['E', 9, 1, 3, 'box pale c', 'Estufa 2'], ['E', 12, 1, 1, 'box pale', 'Licuadora'],
  ['B', 3, 1, 13, 'box green v long', 'Almacén de materias primas e insumos'],
  ['D', 3, 1, 10, 'box purple v', 'Mesa de trabajo'], ['G', 3, 1, 10, 'box cream v', 'Mesa de trabajo'],
  ['I', 3, 1, 10, 'box cream v', 'Mesa de trabajo'], ['K', 3, 1, 10, 'box lilac v', 'Baños'],
  ['B', 16, 1, 4, 'box sky m small', 'Almacén de producto terminado'],
  ['C', 16, 2, 4, 'box mauve m', 'Mesa de trabajo'], ['E', 16, 3, 4, 'box olive m', 'Mesa de trabajo'],
  ['H', 16, 2, 4, 'box peach m', 'Mesa de trabajo'], ['K', 16, 1, 5, 'box lilac m', 'Vestidores'],
  ['D', 20, 1, 1, 'box', 'Empaquetado'], ['E', 20, 3, 1, 'box c', 'Para la cubierta:'], ['H', 20, 2, 1, 'box c', 'Para relleno:'],
  ['B', 20, 1, 9, 'box orange m', 'Recepción'], ['D', 21, 2, 8, 'box m', 'Oficina'],
  ['G', 21, 3, 5, 'box green', ''], ['J', 21, 2, 8, 'box m wide', 'Insumos de limpieza'],
  ['G', 26, 1, 3, 'box c', 'Baño'], ['I', 26, 1, 3, 'box c', 'Baño'],
];
for (let r = 5; r <= 12; r++) blocks.unshift(['C', r, 1, 1, 'box']);
for (let r = 21; r <= 28; r++) blocks.unshift(['C', r, 1, 1, 'box']);
for (const c of 'FHJ') for (let r = 3; r <= 12; r++) blocks.unshift([c, r, 1, 1, 'box']);
for (const c of 'DEFGHIJK') for (let r = 13; r <= 15; r++) blocks.push([c, r, 1, 1, 'box']);
for (const [c, r, w, h, cls, text] of blocks) add('cell ' + cls, letters.indexOf(c) + 2, r + 1, w, h, text);

// cost table
const costs = {
  6: ['3 anaqueles', 1500], 7: ['1 Refrigerador', 16000], 8: ['1  bascula', 4000], 10: ['Bizcocho:'],
  11: ['1 Mesa de trabajo', 12000], 12: ['2 Licuadora', 3000], 13: ['3 Bascula', 4000], 14: ['4 estufa', 9000],
  15: ['Para el relleno'], 16: ['1 Mesa de trabajo', 12000], 17: ['2 Licuadora', 3000], 18: ['3 Bascula', 4000],
  19: ['4 estufa', 9000], 20: ['Para el horno'], 21: ['1 mesa de trabajo', 12000], 22: ['2 hornos', 20000],
  23: ['3 tanques de gas', 18000], 25: ['Baño'], 26: ['1 baño', 2000], 27: ['2 lava manos', 900],
  30: ['Vestidores'], 31: ['1 Bancas', 18000], 32: ['2 Guarda ropa', 4500], 33: ['3 Espejos', 3000],
  35: ['Oficina'], 36: ['1 computadora', 22000],
};
for (const [r, [name, value]] of Object.entries(costs)) {
  add('cell cost', 14, +r + 1, 1, 1, name);
  if (value) add('cell cost r', 15, +r + 1, 1, 1, String(value));
}
add('cell cost', 15, 3, 2, 1, 'Costo de infraestructura');
add('cell cost', 14, 4, 7, 1, 'Nota: anotar las características de cada una de las áreas de trabajo, dimensiones tipos de suelos, bardas. Etc.');
add('cell cost', 14, 6, 3, 1, 'Almacén de materias primas e insumos');
add('pick', 16, 24, 1, 1);
```
